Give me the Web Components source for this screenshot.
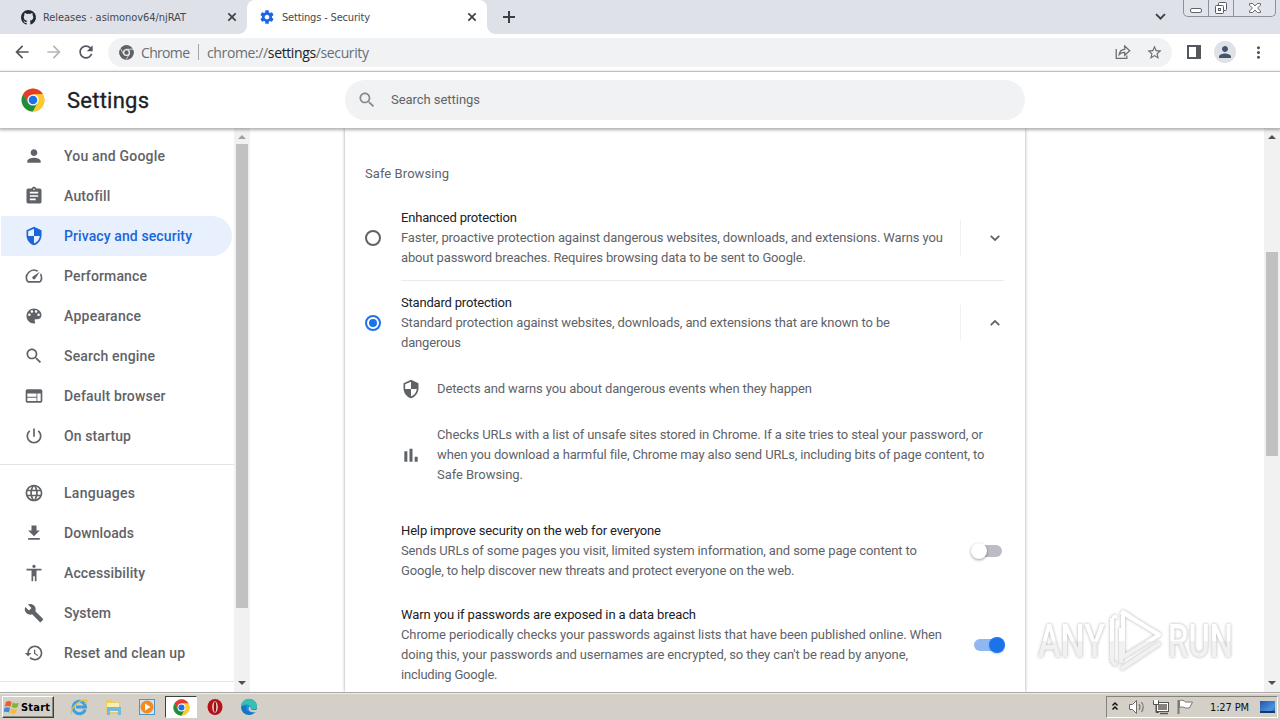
<!DOCTYPE html>
<html lang="en">
<head>
<meta charset="utf-8">
<title>Settings - Security</title>
<style>
html,body{margin:0;height:100%;overflow:hidden;background:#fff}
body{font-family:Roboto,"Liberation Sans",sans-serif;font-size:13px;color:#5f6368}
</style>
</head>
<body>
<desktop-screen></desktop-screen>
<script>
const define=(name,html,setup)=>customElements.define(name,class extends HTMLElement{
  connectedCallback(){
    if(this.shadowRoot)return;
    const t=document.createElement('template');
    t.innerHTML=typeof html==='function'?html(this):html;
    this.attachShadow({mode:'open'}).append(t.content.cloneNode(true));
    if(setup)setup(this);
  }
});

const P={
person:'M12 12c2.21 0 4-1.79 4-4s-1.79-4-4-4-4 1.79-4 4 1.79 4 4 4zm0 2c-2.67 0-8 1.34-8 4v2h16v-2c0-2.66-5.33-4-8-4z',
autofill:'M19 3h-4.18C14.4 1.84 13.3 1 12 1c-1.3 0-2.4.84-2.82 2H5c-1.1 0-2 .9-2 2v14c0 1.1.9 2 2 2h14c1.1 0 2-.9 2-2V5c0-1.1-.9-2-2-2zm-7 0c.55 0 1 .45 1 1s-.45 1-1 1-1-.45-1-1 .45-1 1-1zm2 14H7v-2h7v2zm3-4H7v-2h10v2zm0-4H7V7h10v2z',
shield:'M12 1L3 5v6c0 5.55 3.84 10.74 9 12 5.16-1.26 9-6.45 9-12V5l-9-4zm0 10.99h7c-.53 4.12-3.28 7.79-7 8.94V12H5V6.3l7-3.11v8.8z',
speed:'M20.38 8.57l-1.23 1.85a8 8 0 0 1-.22 7.58H5.07A8 8 0 0 1 15.58 6.85l1.85-1.23A10 10 0 0 0 3.35 19a2 2 0 0 0 1.72 1h13.85a2 2 0 0 0 1.74-1 10 10 0 0 0-.27-10.44zm-9.79 6.84a2 2 0 0 0 2.83 0l5.66-8.49-8.49 5.66a2 2 0 0 0 0 2.83z',
palette:'M12 3c-4.97 0-9 4.03-9 9s4.03 9 9 9c.83 0 1.5-.67 1.5-1.5 0-.39-.15-.74-.39-1.01-.23-.26-.38-.61-.38-.99 0-.83.67-1.5 1.5-1.5H16c2.76 0 5-2.24 5-5 0-4.42-4.03-8-9-8zm-5.5 9c-.83 0-1.5-.67-1.5-1.5S5.67 9 6.5 9 8 9.67 8 10.5 7.33 12 6.5 12zm3-4C8.67 8 8 7.33 8 6.5S8.67 5 9.5 5s1.5.67 1.5 1.5S10.33 8 9.5 8zm5 0c-.83 0-1.5-.67-1.5-1.5S13.67 5 14.5 5s1.5.67 1.5 1.5S15.33 8 14.5 8zm3 4c-.83 0-1.5-.67-1.5-1.5S16.67 9 17.5 9s1.5.67 1.5 1.5-.67 1.5-1.5 1.5z',
search:'M15.5 14h-.79l-.28-.27C15.41 12.59 16 11.11 16 9.5 16 5.91 13.09 3 9.5 3S3 5.91 3 9.5 5.91 16 9.5 16c1.61 0 3.09-.59 4.23-1.57l.27.28v.79l5 4.99L20.49 19l-4.99-5zm-6 0C7.01 14 5 11.99 5 9.5S7.01 5 9.5 5 14 7.01 14 9.5 11.99 14 9.5 14z',
web:'M20 4H4c-1.1 0-1.99.9-1.99 2L2 18c0 1.1.9 2 2 2h16c1.1 0 2-.9 2-2V6c0-1.1-.9-2-2-2zm-5 14H4v-4h11v4zm0-5H4V9h11v4zm5 5h-4V9h4v9z',
power:'M13 3h-2v10h2V3zm4.83 2.17l-1.42 1.42C17.99 7.86 19 9.81 19 12c0 3.87-3.13 7-7 7s-7-3.13-7-7c0-2.19 1.01-4.14 2.58-5.42L6.17 5.17C4.23 6.82 3 9.26 3 12c0 4.97 4.03 9 9 9s9-4.03 9-9c0-2.74-1.23-5.18-3.17-6.83z',
globe:'M11.99 2C6.47 2 2 6.48 2 12s4.47 10 9.99 10C17.52 22 22 17.52 22 12S17.52 2 11.99 2zm6.93 6h-2.95c-.32-1.25-.78-2.45-1.38-3.56 1.84.63 3.37 1.91 4.33 3.56zM12 4.04c.83 1.2 1.48 2.53 1.91 3.96h-3.82c.43-1.43 1.08-2.76 1.91-3.96zM4.26 14C4.1 13.36 4 12.69 4 12s.1-1.36.26-2h3.38c-.08.66-.14 1.32-.14 2s.06 1.34.14 2H4.26zm.82 2h2.95c.32 1.25.78 2.45 1.38 3.56-1.84-.63-3.37-1.9-4.33-3.56zm2.95-8H5.08c.96-1.66 2.49-2.93 4.33-3.56C8.81 5.55 8.35 6.75 8.03 8zM12 19.96c-.83-1.2-1.48-2.53-1.91-3.96h3.82c-.43 1.43-1.08 2.76-1.91 3.96zM14.34 14H9.66c-.09-.66-.16-1.32-.16-2s.07-1.35.16-2h4.68c.09.65.16 1.32.16 2s-.07 1.34-.16 2zm.25 5.56c.6-1.11 1.06-2.31 1.38-3.56h2.95c-.96 1.65-2.49 2.93-4.33 3.56zM16.36 14c.08-.66.14-1.32.14-2s-.06-1.34-.14-2h3.38c.16.64.26 1.31.26 2s-.1 1.36-.26 2h-3.38z',
download:'M19 9h-4V3H9v6H5l7 7 7-7zM5 18v2h14v-2H5z',
access:'M12 2c1.1 0 2 .9 2 2s-.9 2-2 2-2-.9-2-2 .9-2 2-2zm9 7h-6v13h-2v-6h-2v6H9V9H3V7h18v2z',
build:'M22.7 19l-9.1-9.1c.9-2.3.4-5-1.5-6.9-2-2-5-2.4-7.4-1.3L9 6 6 9 1.6 4.7C.4 7.1.9 10.1 2.9 12.1c1.9 1.9 4.6 2.4 6.9 1.5l9.1 9.1c.4.4 1 .4 1.4 0l2.3-2.3c.5-.4.5-1.1.1-1.4z',
history:'M13 3c-4.97 0-9 4.03-9 9H1l3.89 3.89.07.14L9 12H6c0-3.87 3.13-7 7-7s7 3.13 7 7-3.13 7-7 7c-1.93 0-3.68-.79-4.94-2.06l-1.42 1.42C8.27 19.99 10.51 21 13 21c4.97 0 9-4.03 9-9s-4.03-9-9-9zm-1 5v5l4.28 2.54.72-1.21-3.5-2.08V8H12z',
bars:'M4 7.5h3.6V20H4zM10.2 4.5h3.6V20h-3.6zM16.4 14h3.6v6h-3.6z',
gear:'M19.43 12.98c.04-.32.07-.64.07-.98s-.03-.66-.07-.98l2.11-1.65c.19-.15.24-.42.12-.64l-2-3.46c-.12-.22-.39-.3-.61-.22l-2.49 1c-.52-.4-1.08-.73-1.69-.98l-.38-2.65C14.46 2.18 14.25 2 14 2h-4c-.25 0-.46.18-.49.42l-.38 2.65c-.61.25-1.17.59-1.69.98l-2.49-1c-.23-.09-.49 0-.61.22l-2 3.46c-.13.22-.07.49.12.64l2.11 1.65c-.04.32-.07.65-.07.98s.03.66.07.98l-2.11 1.65c-.19.15-.24.42-.12.64l2 3.46c.12.22.39.3.61.22l2.49-1c.52.4 1.08.73 1.69.98l.38 2.65c.03.24.24.42.49.42h4c.25 0 .46-.18.49-.42l.38-2.65c.61-.25 1.17-.59 1.69-.98l2.49 1c.23.09.49 0 .61-.22l2-3.46c.12-.22.07-.49-.12-.64l-2.11-1.65zM12 15.5c-1.93 0-3.5-1.57-3.5-3.5s1.57-3.5 3.5-3.5 3.5 1.57 3.5 3.5-1.57 3.5-3.5 3.5z',
back:'M20 11H7.83l5.59-5.59L12 4l-8 8 8 8 1.41-1.41L7.83 13H20v-2z',
forward:'M12 4l-1.41 1.41L16.17 11H4v2h12.17l-5.58 5.59L12 20l8-8z',
reload:'M17.65 6.35C16.2 4.9 14.21 4 12 4c-4.42 0-7.99 3.58-7.99 8s3.57 8 7.99 8c3.73 0 6.84-2.55 7.73-6h-2.08c-.82 2.33-3.04 4-5.65 4-3.31 0-6-2.69-6-6s2.69-6 6-6c1.66 0 3.14.69 4.22 1.78L13 11h7V4l-2.35 2.35z',
star:'M22 9.24l-7.19-.62L12 2 9.19 8.63 2 9.24l5.46 4.73L5.82 21 12 17.27 18.18 21l-1.63-7.03L22 9.24zM12 15.4l-3.76 2.27 1-4.28-3.32-2.88 4.38-.38L12 6.1l1.71 4.04 4.38.38-3.32 2.88 1 4.28L12 15.4z',
close:'M19.300 6.700L17.300 4.700 12 10 6.700 4.700 4.700 6.700 10 12l-5.300 5.300 2 2L12 14l5.300 5.300 2-2L14 12z',
more:'M12 8c1.1 0 2-.9 2-2s-.9-2-2-2-2 .9-2 2 .9 2 2 2zm0 2c-1.1 0-2 .9-2 2s.9 2 2 2 2-.9 2-2-.9-2-2-2zm0 6c-1.1 0-2 .9-2 2s.9 2 2 2 2-.9 2-2-.9-2-2-2z',
down:'M7.200 8.200L12 13l4.800-4.800L18.500 9.900 12 16.400 5.500 9.900z',
up:'M7.200 15.800L12 11l4.800 4.800L18.500 14.100 12 7.600 5.500 14.100z',
github:'M12 1.5C6.2 1.5 1.5 6.2 1.5 12c0 4.64 3.01 8.58 7.18 9.96.53.1.72-.23.72-.5v-1.96c-2.92.64-3.54-1.24-3.54-1.24-.48-1.21-1.17-1.54-1.17-1.54-.95-.65.07-.64.07-.64 1.05.08 1.61 1.09 1.61 1.09.94 1.6 2.45 1.14 3.05.87.1-.68.37-1.14.67-1.4-2.33-.27-4.78-1.17-4.78-5.2 0-1.14.41-2.08 1.08-2.82-.11-.27-.47-1.34.1-2.78 0 0 .88-.28 2.89 1.08a10 10 0 0 1 5.26 0c2-1.36 2.88-1.08 2.88-1.08.58 1.44.22 2.51.11 2.78.68.74 1.08 1.68 1.08 2.82 0 4.04-2.46 4.92-4.8 5.18.38.33.72.97.72 1.95v2.89c0 .28.19.61.73.5A10.5 10.5 0 0 0 12 1.5z'
};
define('ui-icon',el=>{const s=el.getAttribute('size')||20;return `<style>:host{display:block;flex:none;width:${s}px;height:${s}px}svg{display:block}</style>
<svg width="${s}" height="${s}" viewBox="0 0 24 24" fill="currentColor"><path d="${P[el.getAttribute('name')]}"/></svg>`});

/* One line of text tracked to a given advance width. */
define('text-line',`<style>:host{display:block;white-space:pre}span{display:inline-block}</style><span><slot></slot></span>`,el=>{
  const w=+el.getAttribute('w');if(!w)return;
  const s=el.shadowRoot.querySelector('span'),n=el.textContent.length;
  const cur=s.getBoundingClientRect().width;
  if(cur)s.style.letterSpacing=((w-cur)/(n-1)).toFixed(4)+'px';
});

define('chrome-logo',el=>{const s=el.getAttribute('size'),m=el.hasAttribute('mono');
 const c=m?['#5f6368','#5f6368','#5f6368','#5f6368','#f1f3f4']:['#e33b2e','#fcc934','#1e8e3e','#1a73e8','#fff'];
 const line=m?'<path d="M24 13.5H45M14.9 29.2 4.5 11M33.1 29.2 22.6 47" stroke="#f1f3f4" stroke-width="2.5"/>':'';
 return `<style>:host{display:block;flex:none;width:${s}px;height:${s}px}svg{display:block}</style>
<svg width="${s}" height="${s}" viewBox="0 0 48 48"><circle cx="24" cy="24" r="23" fill="${c[1]}"/>
<path d="M24 24 13.9 29.5 4.1 12.5A23 23 0 0 1 43.9 12.5L24 13z" fill="${c[0]}"/>
<path d="M4.1 12.5 14.5 29.5 24 34 33.5 29.5 24 47A23 23 0 0 1 4.1 12.5z" fill="${c[2]}"/>
<path d="M43.9 12.5A23 23 0 0 1 24 47L33.5 29.5 33 18 24 12.5z" fill="${c[1]}"/>${line}
<circle cx="24" cy="24" r="11.2" fill="${c[4]}"/><circle cx="24" cy="24" r="${m?7:8.6}" fill="${c[3]}"/></svg>`});

define('browser-tab',el=>`<style>
:host{display:flex;align-items:center;box-sizing:border-box;height:34px;width:${el.getAttribute('width')}px;padding:0 8px 0 ${el.getAttribute('pad')}px;color:#45494e;font:11px "DejaVu Sans Condensed","DejaVu Sans",sans-serif;font-stretch:condensed}
:host([active]){background:#fff;border-radius:8px 8px 0 0;position:relative}
:host([active])::before,:host([active])::after{content:"";position:absolute;bottom:0;width:8px;height:8px}
:host([active])::before{left:-8px;background:radial-gradient(circle at 0 0,#dee1e8 7.5px,#fff 8px)}
:host([active])::after{right:-8px;background:radial-gradient(circle at 100% 0,#dee1e8 7.5px,#fff 8px)}
.t{flex:1;margin-left:7px}.x{color:#3c4043}</style>
<slot name="icon"></slot><div class="t"><slot></slot></div><ui-icon class="x" name="close" size="14"></ui-icon>`);

define('window-controls',`<style>:host{display:flex;box-sizing:border-box;width:93px;height:17px;border:1px solid #8e9198;border-top:0;border-radius:0 0 5px 5px;background:#e1e4eb}
div{border-right:1px solid #8e9198;display:flex;justify-content:center;width:24px}div:last-of-type{flex:1;border:0}svg{display:block}</style>
<div><svg width="14" height="16"><rect x="1.5" y="8.5" width="11" height="4" rx="1.5" fill="#fff" stroke="#61646b"/></svg></div>
<div><svg width="14" height="16" fill="#fff" stroke="#555960"><rect x="4.5" y="2.5" width="8" height="8" rx="1"/><rect x="1.5" y="5.5" width="8" height="8" rx="1"/><rect x="4.5" y="8.5" width="2" height="2"/></svg></div>
<div><svg width="14" height="16"><path d="M1.5 3.5h3.2L7 6l2.3-2.5h3.2v1.6L9.6 8l2.9 3v1.5H9.3L7 10l-2.3 2.5H1.5V11l2.9-3-2.9-2.9z" fill="#fff" stroke="#6a6d74"/></svg></div>`);

define('tab-strip',`<style>:host{display:flex;height:34px;background:#dee1e8;color:#3c4043}
.new{margin:10px 0 0 15px}.spring{flex:1}.d{margin:7px 13px 0 0}svg{display:block}window-controls{margin-right:4px}</style>
<browser-tab width="247" pad="20"><ui-icon slot="icon" name="github" size="17" style="color:#24292f;margin-right:-1px"></ui-icon><text-line w="143">Releases · asimonov64/njRAT</text-line></browser-tab>
<browser-tab active width="240" pad="12"><ui-icon slot="icon" name="gear" size="16" style="color:#1a66e8"></ui-icon><text-line w="88">Settings - Security</text-line></browser-tab>
<svg class="new" width="14" height="14" stroke="#3c4043" stroke-width="2"><path d="M7 1v12M1 7h12"/></svg><div class="spring"></div>
<ui-icon class="d" name="down" size="19"></ui-icon><window-controls></window-controls>`);

define('address-bar',`<style>:host{display:flex;align-items:center;box-sizing:border-box;width:1064px;height:29px;border-radius:15px;background:#f0f2f4;padding:0 9px 0 11px;font:14px "Open Sans","Noto Sans",sans-serif;color:#6a6e73}
i{width:1px;height:16px;background:#a5a8ac;margin:0 8px}.host{color:#202124}.name{width:49px;margin-left:7px}.url{flex:1}.name,.url{margin-top:1px}svg{display:block;margin-right:15px}</style>
<chrome-logo mono size="15"></chrome-logo><text-line class="name" w="49">Chrome</text-line><i></i>
<text-line class="url" w="162">chrome://<span class="host">settings</span>/security</text-line>
<svg width="16" height="16" fill="none" stroke="#6b6f73" stroke-width="1.3"><path d="M1.2 5v9.3h10.6V11.500M4.200 10.500c.4-3.300 2.500-5 5.500-5.200V2l5 4.800-5 4.500V8.300C7.300 8.200 5.600 8.900 4.200 10.500z"/></svg>
<ui-icon name="star" size="17"></ui-icon>`);

define('tool-bar',`<style>:host{display:flex;align-items:center;box-sizing:border-box;height:38px;border-bottom:1px solid #d5d6d8;background:#fff;padding:0 11px 1px 12px;color:#54585c}
.f{color:#b5b7ba}.f,.r{margin-left:12px}address-bar{margin:0 15px 0 12px}svg{display:block}
.av{width:22px;height:22px;border-radius:50%;background:#dee1e6;color:#46536f;display:flex;justify-content:center;align-items:center;margin:0 13px 0 13px}</style>
<ui-icon name="back"></ui-icon><ui-icon class="f" name="forward"></ui-icon><ui-icon class="r" name="reload"></ui-icon>
<address-bar></address-bar>
<svg width="14" height="14"><path d="M1 1h12v12H1z" fill="#fff" stroke="#54585c" stroke-width="2"/><path d="M9 0h5v14H9z" fill="#54585c"/></svg>
<div class="av"><ui-icon name="person" size="18"></ui-icon></div><ui-icon name="more" size="19"></ui-icon>`);

define('settings-header',`<style>:host{display:flex;align-items:center;box-sizing:border-box;height:56px;padding-left:21px;background:#fff;position:relative;z-index:2;box-shadow:0 1px 3px 1px rgba(60,64,67,.42)}
h1{margin:2px 0 0 22px;width:278px;font:400 22px/28px Roboto,sans-serif;color:#202124;-webkit-text-stroke:.3px #202124}
.s{display:flex;align-items:center;width:680px;box-sizing:border-box;height:40px;border-radius:20px;background:#f0f2f4;padding-left:12px;color:#5f6368}.s ui-icon{color:#85898e;margin-right:14px}.s text-line{margin-top:-2px}</style>
<chrome-logo size="24"></chrome-logo><h1><text-line w="82">Settings</text-line></h1>
<div class="s"><ui-icon name="search"></ui-icon><text-line w="89">Search settings</text-line></div>`);

define('menu-item',el=>`<style>:host{display:flex;align-items:center;box-sizing:border-box;height:40px;width:231px;margin-left:1px;padding-left:23px;border-radius:0 20px 20px 0;font:500 14px Roboto,sans-serif;color:#5f6368}
:host([selected]){background:#e8f0fd;color:#1a66d8}text-line{margin-left:20px}</style>
<ui-icon name="${el.getAttribute('icon')}"></ui-icon><text-line w="${el.getAttribute('w')}">${el.textContent}</text-line>`);

define('scroll-bar',el=>`<style>:host{display:flex;flex-direction:column;align-items:center;flex:none;width:16px;height:564px;background:#f1f1f1}
i{width:12px;background:#c1c1c1;margin-top:${el.getAttribute('top')}px;height:${el.getAttribute('len')}px}
svg{display:block;height:16px;flex:none}.e{flex:1}</style>
<svg width="16" style="margin-top:1px"><path d="M4 10l4-4 4 4z" fill="${el.getAttribute('up')||'#505050'}"/></svg><i></i><div class="e"></div><svg width="16"><path d="M4 5l4 4 4-4z" fill="#505050"/></svg>`);

define('side-menu',()=>{const m=a=>a.map(([i,t,w])=>`<menu-item icon="${i}" w="${w}"${i=='shield'?' selected':''}>${t}</menu-item>`).join('');
return `<style>:host{display:flex;height:564px;width:250px;flex:none;overflow:hidden}nav{width:234px;padding-top:8px;box-sizing:border-box}hr{margin:8px 0;border:0;height:1px;background:#e3e4e6}</style><nav>
${m([['person','You and Google',101],['autofill','Autofill',46],['shield','Privacy and security',128],['speed','Performance',83],['palette','Appearance',77],['search','Search engine',91],['web','Default browser',101.5],['power','On startup',67]])}<hr>
${m([['globe','Languages',71],['download','Downloads',70],['access','Accessibility',81],['build','System',47],['history','Reset and clean up',121]])}<hr></nav>
<scroll-bar top="-1" len="464" up="#a0a0a0"></scroll-bar>`});

define('radio-dot',`<style>:host{display:block;box-sizing:border-box;width:16px;height:16px;border:2px solid #5f6368;border-radius:50%;padding:2px}
:host([checked]){border-color:#1a73e8}:host([checked])::before{content:"";display:block;width:8px;height:8px;border-radius:50%;background:#1a73e8}</style>`);

define('toggle-switch',`<style>:host{display:flex;align-items:center;width:28px;height:12px;border-radius:6px;background:#bcbdc4}
i{width:16px;height:16px;flex:none;border-radius:50%;background:#fff;margin-left:-3px;box-shadow:0 1px 3px rgba(0,0,0,.4)}
:host([on]){background:#8fb8f3}:host([on]) i{background:#1a73e8;margin-left:15px;box-shadow:0 1px 2px rgba(26,115,232,.3)}</style><i></i>`);

define('option-row',`<style>:host{display:flex;align-items:center;line-height:20px}
.lead{width:36px;flex:none}.txt{width:559px;flex:none}.trail{flex:1;display:flex;align-items:center;justify-content:flex-end}
::slotted([slot=title]){color:#202124}</style>
<div class="lead"><slot name="lead"></slot></div><div class="txt"><slot name="title"></slot><slot></slot></div><div class="trail"><slot name="trail"></slot></div>`);

define('expand-button',el=>`<style>:host{display:flex;align-items:center;justify-content:center;flex:1;height:36px;border-left:1px solid #eff0f2;padding-left:24px;color:#5f6368}</style><ui-icon name="${el.getAttribute('dir')}" size="18"></ui-icon>`);

define('detail-row',el=>`<style>:host{display:flex;align-items:center;margin-left:36px;line-height:20px}ui-icon{margin-right:16px;color:#5f6368}</style><ui-icon name="${el.getAttribute('icon')}"></ui-icon><div><slot></slot></div>`);

define('security-card',`<style>:host{display:block;box-sizing:border-box;width:680px;height:564px;padding:36px 20px 0;background:#fff;box-shadow:0 0 3px 0 rgba(60,64,67,.5);line-height:20px}
.sec{height:20px}.a{margin-top:24px}hr{border:0;height:1px;background:#e8eaed;margin:12px 1px 12px 36px}
.d1{margin-top:26px}.d2{margin-top:26px}.h{margin-top:36px}.w{margin-top:24px}.off{margin-right:3px}.on{margin-right:3px}</style>
<text-line class="sec" w="84">Safe Browsing</text-line>
<option-row class="a"><radio-dot slot="lead"></radio-dot><text-line slot="title" w="116">Enhanced protection</text-line><text-line w="542">Faster, proactive protection against dangerous websites, downloads, and extensions. Warns you</text-line><text-line w="405">about password breaches. Requires browsing data to be sent to Google.</text-line><expand-button slot="trail" dir="down"></expand-button></option-row>
<hr>
<option-row><radio-dot slot="lead" checked></radio-dot><text-line slot="title" w="111">Standard protection</text-line><text-line w="489">Standard protection against websites, downloads, and extensions that are known to be</text-line><text-line w="60">dangerous</text-line><expand-button slot="trail" dir="up"></expand-button></option-row>
<detail-row class="d1" icon="shield"><text-line w="375">Detects and warns you about dangerous events when they happen</text-line></detail-row>
<detail-row class="d2" icon="bars"><text-line w="546">Checks URLs with a list of unsafe sites stored in Chrome. If a site tries to steal your password, or</text-line><text-line w="547">when you download a harmful file, Chrome may also send URLs, including bits of page content, to</text-line><text-line w="86">Safe Browsing.</text-line></detail-row>
<option-row class="h"><text-line slot="title" w="260">Help improve security on the web for everyone</text-line><text-line w="516">Sends URLs of some pages you visit, limited system information, and some page content to</text-line><text-line w="393.500">Google, to help discover new threats and protect everyone on the web.</text-line><toggle-switch class="off" slot="trail"></toggle-switch></option-row>
<option-row class="w"><text-line slot="title" w="295">Warn you if passwords are exposed in a data breach</text-line><text-line w="541">Chrome periodically checks your passwords against lists that have been published online. When</text-line><text-line w="507">doing this, your passwords and usernames are encrypted, so they can't be read by anyone,</text-line><text-line w="96.500">including Google.</text-line><toggle-switch class="on" on slot="trail"></toggle-switch></option-row>`);

define('water-mark',`<style>:host{position:absolute;left:1030px;top:600px;z-index:5}svg{display:block;overflow:visible;filter:drop-shadow(0 0 1.500px rgba(0,0,0,.32))}text{font:500 47px Roboto,sans-serif}</style>
<svg width="245" height="82"><defs><linearGradient id="g" x2="0" y2="1"><stop offset=".5" stop-color="#fff"/><stop offset=".52" stop-color="#f1f1f1"/></linearGradient></defs>
<text x="8" y="57" textLength="67" lengthAdjust="spacingAndGlyphs" style="fill:url(#g)">ANY</text><text x="138" y="57" textLength="65" lengthAdjust="spacingAndGlyphs" style="fill:url(#g)">RUN</text>
<g fill="none" stroke="url(#g)" stroke-width="4" stroke-linejoin="round"><path d="M93 12v45l36-22zM91 63V28M91 12l39 23M91 69l39-26"/><path d="M82 18v44M82 18l5-2M82 62l5 3"/></g></svg>`);

define('start-button',`<style>:host{display:flex;align-items:center;box-sizing:border-box;width:52px;height:22px;border:1px solid;border-color:#fff #404040 #404040 #fff;box-shadow:inset -1px -1px #8c8984;background:#d4d0c8;color:#000;font:bold 11px "DejaVu Sans Condensed","DejaVu Sans",sans-serif;font-stretch:condensed}svg{display:block;margin:0 1px 0 1px}</style>
<svg width="16" height="16"><path d="M2 3c2-1.300 3.600-1.200 5.600.1L6.400 7.800C4.500 6.700 3 6.700.7 7.600z" fill="#e8602a"/><path d="M8.600 3.500c2 1.200 3.800 1.200 6.100.2l-1.300 4.600c-2 .9-3.800.8-5.900-.2z" fill="#7fb53a"/><path d="M.5 8.900c2-.9 3.700-.9 5.600.2l-1.200 4.500c-2-1-3.500-1-5.200-.2z" fill="#3f8ad8"/><path d="M7.200 9.500c2 1 3.700 1.100 5.900.2l-1.300 4.400c-2 .9-3.700.8-5.800-.2z" fill="#f6bd2c"/></svg><text-line w="29">Start</text-line>`);

define('system-tray',`<style>:host{display:flex;align-items:center;box-sizing:border-box;width:172px;height:22px;border:1px solid;border-color:#86837d #fff #fff #86837d;color:#111;font:11px "DejaVu Sans Condensed","DejaVu Sans",sans-serif;font-stretch:condensed}svg{display:block;flex:none}</style>
<svg width="105" height="20" fill="none"><path d="M5.500 8.500l2.500-2.500 2.500 2.500M5.500 12.500L8 10l2.500 2.500" stroke="#111" stroke-width="1.500"/>
<path d="M22.500 7.500h3l4-4v13l-4-4h-3z" fill="#fff" stroke="#6c6a66"/><path d="M32 7q2 3 0 6M34.500 5q3.500 5 0 10" stroke="#777" stroke-width="1.200"/>
<rect x="49.500" y="5.500" width="12" height="9" fill="#85827c" stroke="#555"/><rect x="50.500" y="6.500" width="10" height="7" stroke="#fff"/><path d="M53 16.500h8" stroke="#555" stroke-width="1.500"/><path d="M46.500 3.500v4h5v-4M49 7.500v8h3" stroke="#555"/><rect x="47" y="3" width="4" height="4" fill="#fff"/>
<path d="M71.500 3v14" stroke="#777" stroke-width="2"/><path d="M72.500 3.500c3-.8 4 0 6 1.500h7l-3 6h-4c-2-1-4-1.500-6-.5z" fill="#fff" stroke="#777"/></svg>
<text-line w="39" style="margin-left:-2px">1:27 PM</text-line>
<svg width="18" height="16" style="margin-left:9px"><defs><linearGradient id="b" x2="1" y2="1"><stop stop-color="#2256a8"/><stop offset=".7" stop-color="#4b93df"/><stop offset="1" stop-color="#2358a5"/></linearGradient></defs><rect x="2" y="2" width="15" height="12" fill="url(#b)"/><path d="M2 12h15v2H2z" fill="#17386b"/></svg>`);

define('task-bar',`<style>:host{display:flex;align-items:center;box-sizing:border-box;height:28px;border-top:1px solid #a9a7a2;box-shadow:inset 0 1px #efedea;background:#d4d0c8;padding:1px 2px 0 2px}
.i{width:34px;height:22px;display:flex;align-items:center;justify-content:center}.p{box-sizing:border-box;width:32px;background:#fff;border:1px solid;border-color:#404040 #fff #fff #404040;margin:0 1px}
.spring{flex:1}svg{display:block}start-button{margin-right:8px}</style>
<start-button></start-button>
<div class="i"><svg width="18" height="18"><path d="M15.200 11.500A6.200 6.200 0 1 1 15.500 9H6" fill="none" stroke="#3f9fdd" stroke-width="3"/><path d="M2 16C-1 12 8 2 16 2q2 1-1 4" fill="none" stroke="#e9bd45" stroke-width="1.300"/></svg></div>
<div class="i"><svg width="18" height="18"><path d="M2 2h6l1 2h7v12H2z" fill="#e9cc68"/><path d="M3 5h12v9H3z" fill="#f9edb3"/><path d="M3 9h14v8h-3v-4H6v4H3z" fill="#75badb"/></svg></div>
<div class="i"><svg width="18" height="18"><rect x="1.500" y="1.500" width="15" height="15" fill="#cfe5f5" stroke="#4a97cc"/><circle cx="9" cy="9" r="6.500" fill="#f58b1f"/><path d="M7 5.500v7l5.500-3.500z" fill="#fff"/></svg></div>
<div class="i p"><chrome-logo size="17"></chrome-logo></div>
<div class="i"><svg width="18" height="18"><ellipse cx="9" cy="9" rx="7.500" ry="8" fill="#b51218"/><ellipse cx="9" cy="9" rx="2.800" ry="5.800" fill="#e9d2cf"/><ellipse cx="9" cy="9" rx="1.200" ry="5.200" fill="#8c1014"/></svg></div>
<div class="i"><svg width="18" height="18"><circle cx="9" cy="9" r="8" fill="#1674c4"/><path d="M1 9A8 8 0 0 1 17 8.500c0 3-4 4-6 2.500 1-3-5-6-10-2z" fill="#35c0b3"/><path d="M1 9c4-5 11-2 10 2 1 1.500 4 1.500 5.600.2l.4 2.300C13 16 6 14 6 10c0-1 .5-2 .5-2C4 7 2 8 1 9z" fill="#1d8fe0"/><path d="M9.500 8.500c1.500 1 1.500 2 1.200 2.800 1.500 1.200 4 1.200 6 .2l1 2c-3 1.500-9 1-9-2.500 0-1 .3-2 .8-2.500z" fill="#d4d0c8"/></svg></div>
<div class="spring"></div><system-tray></system-tray>`);

define('desktop-screen',`<style>:host{display:flex;flex-direction:column;width:1280px;height:720px;overflow:hidden;position:relative}
main{display:flex;height:564px}.c{flex:1;display:flex;padding-left:95px;overflow:hidden}</style>
<tab-strip></tab-strip><tool-bar></tool-bar><settings-header></settings-header>
<main><side-menu></side-menu><div class="c"><security-card></security-card></div><scroll-bar top="107" len="204"></scroll-bar></main>
<task-bar></task-bar><water-mark></water-mark>`);
</script>
</body>
</html>
